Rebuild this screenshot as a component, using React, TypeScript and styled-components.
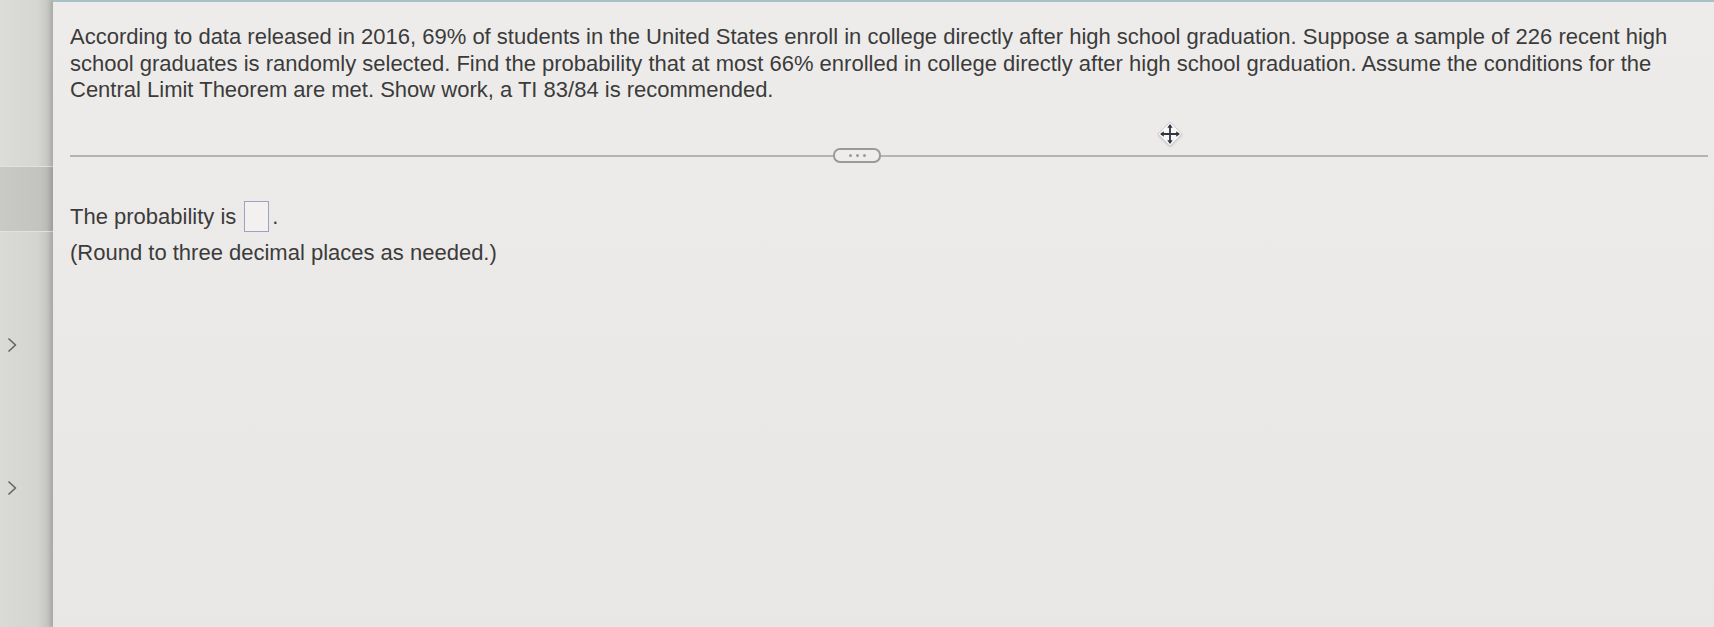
import styled, { createGlobalStyle } from 'styled-components'

const GlobalStyle = createGlobalStyle`
  html, body {
    margin: 0;
    padding: 0;
    background: #d6d6d3;
  }
`

const App = () => {
  return (
    <Page>
      <GlobalStyle />
      <Sidebar>
        <SideBlock height={166} />
        <SideBlock height={64} selected />
        <ChevronSlot top={104}>
          <Chevron />
        </ChevronSlot>
        <ChevronSlot top={125}>
          <Chevron />
        </ChevronSlot>
      </Sidebar>
      <Main>
        <Question>
          According to data released in 2016, 69% of students in the United States enroll in college
          directly after high school graduation. Suppose a sample of 226 recent high school graduates is
          randomly selected. Find the probability that at most 66% enrolled in college directly after high
          school graduation. Assume the conditions for the Central Limit Theorem are met. Show work, a TI
          83/84 is recommended.
        </Question>
        <DividerRow>
          <MoveHandle>
            <MoveIcon />
          </MoveHandle>
          <Rule />
          <MorePill>
            <Dot />
            <Dot />
            <Dot />
          </MorePill>
        </DividerRow>
        <Answer>
          <AnswerLine>
            The probability is <AnswerBox />.
          </AnswerLine>
          <Hint>(Round to three decimal places as needed.)</Hint>
        </Answer>
      </Main>
    </Page>
  )
}

export default App

const Chevron = () => (
  <svg width="14" height="18" viewBox="0 0 14 18">
    <path d="M4 3 L10.5 9 L4 15" fill="none" stroke="#666" strokeWidth="1.7" strokeLinecap="round" strokeLinejoin="round" />
  </svg>
)

const MoveIcon = () => (
  <svg width="28" height="28" viewBox="0 0 28 28">
    <path d="M14 2 L26 14 L14 26 L2 14 Z" fill="#f7f7f7" stroke="#d0d0d0" strokeWidth="1" />
    <path d="M14 5 V23 M5 14 H23" stroke="#343442" strokeWidth="1.8" />
    <path d="M14 4 L11.3 7.8 H16.7 Z M14 24 L11.3 20.2 H16.7 Z M4 14 L7.8 11.3 V16.7 Z M24 14 L20.2 11.3 V16.7 Z" fill="#343442" />
  </svg>
)

const Page = styled.div`
  display: flex;
  width: 100%;
  height: 100vh;
  overflow: hidden;
  font-family: 'Liberation Sans', Arial, sans-serif;
`

const Sidebar = styled.aside`
  width: 53px;
  flex-shrink: 0;
  display: flex;
  flex-direction: column;
  background: linear-gradient(90deg, #dadad7 0%, #d4d4d1 70%, #bdbdba 100%);
`

const SideBlock = styled.div<{ height: number; selected?: boolean }>`
  height: ${(p) => p.height}px;
  border-bottom: 1px solid #e2e2df;
  background: ${(p) =>
    p.selected
      ? 'linear-gradient(90deg, #c9c9c6 0%, #c3c3c0 75%, #b2b2af 100%)'
      : 'linear-gradient(90deg, #dcdcd9 0%, #d6d6d3 70%, #c0c0bd 100%)'};
`

const ChevronSlot = styled.div<{ top: number }>`
  margin-top: ${(p) => p.top}px;
  padding-left: 5px;
  height: 18px;
`

const Main = styled.main`
  flex: 1;
  display: flex;
  flex-direction: column;
  background: linear-gradient(180deg, #eeecea 0%, #ebe9e7 60%, #e9e7e5 100%);
  border-top: 2px solid #a9c1c6;
  box-shadow: -3px 0 4px rgba(0, 0, 0, 0.12);
  padding: 22px 6px 0 17px;
`

const Question = styled.p`
  margin: 0;
  max-width: 1630px;
  font-size: 22px;
  line-height: 26.5px;
  color: #3b3b3b;
`

const DividerRow = styled.div`
  position: relative;
  margin-top: 40px;
  height: 20px;
`

const Rule = styled.div`
  position: absolute;
  left: 0;
  right: 0;
  top: 11px;
  height: 2px;
  background: #b4b4b2;
`

const MorePill = styled.div`
  position: absolute;
  left: 763px;
  top: 4px;
  width: 44px;
  height: 11px;
  display: flex;
  align-items: center;
  justify-content: center;
  gap: 4px;
  border: 2px solid #9a9a9a;
  border-radius: 7px;
  background: #efedeb;
`

const Dot = styled.span`
  width: 3px;
  height: 3px;
  border-radius: 50%;
  background: #9a9a9a;
`

const MoveHandle = styled.div`
  position: absolute;
  left: 1086px;
  top: -24px;
  width: 28px;
  height: 28px;
  filter: drop-shadow(0 1px 1px rgba(0, 0, 0, 0.15));
`

const Answer = styled.div`
  margin-top: 37px;
  display: flex;
  flex-direction: column;
  gap: 6px;
  color: #3b3b3b;
  font-size: 22px;
`

const AnswerLine = styled.div`
  display: flex;
  align-items: center;
  line-height: 32px;
`

const AnswerBox = styled.span`
  display: inline-block;
  width: 23px;
  height: 29px;
  margin-left: 8px;
  margin-right: 3px;
  border: 1.5px solid #9ea1c4;
  background: #f2f1ef;
`

const Hint = styled.div`
  line-height: 28px;
`
